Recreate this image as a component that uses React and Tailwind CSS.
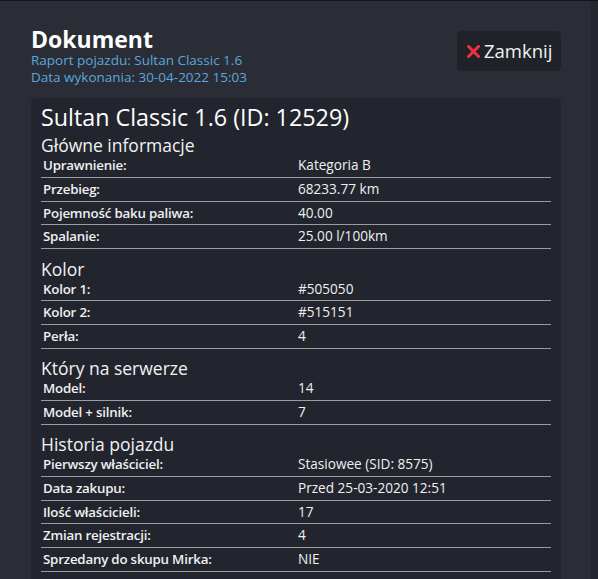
import React from "react";

const sections = [
  {
    title: "Główne informacje",
    rows: [
      ["Uprawnienie:", "Kategoria B"],
      ["Przebieg:", "68233.77 km"],
      ["Pojemność baku paliwa:", "40.00"],
      ["Spalanie:", "25.00 l/100km"],
    ],
  },
  {
    title: "Kolor",
    rows: [
      ["Kolor 1:", "#505050"],
      ["Kolor 2:", "#515151"],
      ["Perła:", "4"],
    ],
  },
  {
    title: "Który na serwerze",
    rows: [
      ["Model:", "14"],
      ["Model + silnik:", "7"],
    ],
  },
  {
    title: "Historia pojazdu",
    rows: [
      ["Pierwszy właściciel:", "Stasiowee (SID: 8575)"],
      ["Data zakupu:", "Przed 25-03-2020 12:51"],
      ["Ilość właścicieli:", "17"],
      ["Zmian rejestracji:", "4"],
      ["Sprzedany do skupu Mirka:", "NIE"],
    ],
  },
];

const CloseIcon = () => (
  <svg width="13" height="13" viewBox="0 0 13 13" className="shrink-0">
    <path d="M1.5 1.5 L11.5 11.5 M11.5 1.5 L1.5 11.5" stroke="#f0303f" strokeWidth="3" strokeLinecap="square" />
  </svg>
);

const Section = ({ title, rows, first }) => (
  <div className={first ? "mt-[6.6px]" : "mt-[11.6px]"}>
    <h3 className="text-[17.5px] leading-[17px] text-[#f2f2f2]">{title}</h3>
    <div>
      {rows.map(([label, value]) => (
        <div
          key={label}
          className="grid grid-cols-2 border-b border-[#9b9da1] leading-[22.7px] text-[#f0f0f0]"
        >
          <div className="px-[2px] text-[13.3px] font-semibold tracking-[-0.2px]">{label}</div>
          <div className="px-[2px] text-[13.6px]">{value}</div>
        </div>
      ))}
    </div>
  </div>
);

const App = () => {
  return (
    <div
      className="w-[598px] h-[579px] overflow-hidden flex bg-[#2a2d36] border-t border-[#141414]"
      style={{ fontFamily: '"Open Sans", "Noto Sans", sans-serif' }}
    >
      <div className="flex-1 flex flex-col pl-[31px] pr-[30px]">
        <div className="flex justify-between items-start">
          <div className="pt-[27px]">
            <h1 className="text-[23px] leading-[22px] font-bold text-white">Dokument</h1>
            <div className="mt-[1.5px] text-[13.5px] leading-[17.5px] text-[#5aa7de]">
              <p>Raport pojazdu: Sultan Classic 1.6</p>
              <p>Data wykonania: 30-04-2022 15:03</p>
            </div>
          </div>
          <button className="mt-[30px] w-[104px] h-[40px] rounded-[5px] bg-[#1f2229] flex items-center gap-[4px] pl-[10px] text-[18.5px] text-[#f2f2f2]">
            <CloseIcon />
            <span>Zamknij</span>
          </button>
        </div>

        <div className="mt-[11px] flex-1 rounded-t-[5px] bg-[#22252d] pt-[5px] px-[10px]">
          <h2 className="text-[23.3px] leading-[28px] text-white">Sultan Classic 1.6 (ID: 12529)</h2>
          {sections.map((s, i) => (
            <Section key={s.title} title={s.title} rows={s.rows} first={i === 0} />
          ))}
        </div>
      </div>
      <div className="w-[7px] bg-[#24272f]" />
    </div>
  );
};

export default App;
